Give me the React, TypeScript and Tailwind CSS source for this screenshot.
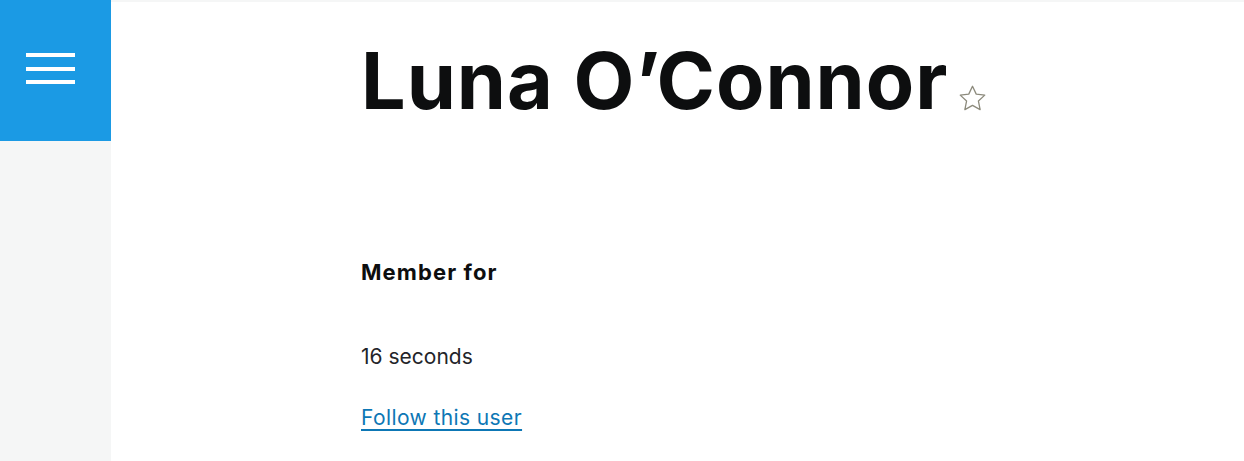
import React from "react";

export default function App() {
  return (
    <div className="flex w-[1244px] h-[461px] overflow-hidden bg-white" style={{ fontFamily: "Inter, 'Noto Sans', sans-serif" }}>
      <div className="w-[111px] shrink-0 flex flex-col bg-[#f5f6f6]">
        <div className="h-[141px] bg-[#1b9ae4] flex flex-col pl-[26px] pt-[53px] gap-[9.5px]">
          <span className="block w-[49px] h-[4px] bg-white" />
          <span className="block w-[49px] h-[4px] bg-white" />
          <span className="block w-[49px] h-[4px] bg-white" />
        </div>
      </div>
      <div className="flex-1 flex flex-col">
        <div className="h-[2px] bg-[#f5f6f6]" />
        <div className="pl-[250px] pt-[28px]">
          <div className="flex items-end">
            <h1 className="text-[79px] leading-[100px] font-bold tracking-[1px] text-[#0d0e0f]">Luna O’Connor</h1>
            <svg className="ml-[9px] mb-[16px]" width="31" height="31" viewBox="0 0 24 24" fill="none" stroke="#8c8a7c" strokeWidth="1" strokeLinejoin="round">
              <path d="M12 2.5l2.9 6.1 6.6.8-4.9 4.6 1.3 6.6L12 17.3l-5.9 3.3 1.3-6.6-4.9-4.6 6.6-.8z" />
            </svg>
          </div>
          <div className="mt-[130px] text-[22px] font-bold tracking-[1.1px] text-[#0d0e0f] leading-[24px]">Member for</div>
          <div className="mt-[61px] text-[21px] text-[#232429] leading-[24px]">16 seconds</div>
          <a href="#" className="mt-[37px] block text-[21px] tracking-[0.4px] text-[#0d77b5] underline decoration-2 leading-[24px] underline-offset-[4px]">Follow this user</a>
        </div>
      </div>
    </div>
  );
}
